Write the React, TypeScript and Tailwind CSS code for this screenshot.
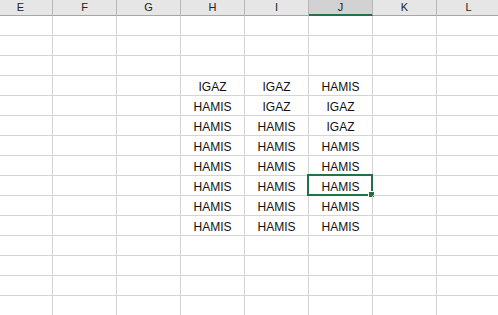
import clsx from 'clsx';

const columns = ['E', 'F', 'G', 'H', 'I', 'J', 'K', 'L'];

const data: Record<string, string[]> = {
  H: ['IGAZ', 'HAMIS', 'HAMIS', 'HAMIS', 'HAMIS', 'HAMIS', 'HAMIS', 'HAMIS'],
  I: ['IGAZ', 'IGAZ', 'HAMIS', 'HAMIS', 'HAMIS', 'HAMIS', 'HAMIS', 'HAMIS'],
  J: ['HAMIS', 'IGAZ', 'IGAZ', 'HAMIS', 'HAMIS', 'HAMIS', 'HAMIS', 'HAMIS'],
};

const firstDataRow = 3;
const rowCount = 16;
const selected = { col: 'J', row: firstDataRow + 5 };

function App(): JSX.Element {
  return (
    <div className="h-[315px] w-[498px] overflow-hidden bg-white font-['Liberation_Sans',Arial,sans-serif]">
      <div className="ml-[-11px] w-max">
        <div className="flex">
          {columns.map(col => (
            <div
              className={clsx(
                'flex h-[16px] w-[64px] items-start justify-center border-r border-[#b7b7b7] pt-[1px] text-[11px] leading-[13px] text-[#222]',
                col === selected.col ? 'border-b-2 border-b-[#217346] bg-[#d2d2d2]' : 'border-b border-b-[#a6a6a6] bg-[#e6e6e6]'
              )}
              key={col}
            >
              {col}
            </div>
          ))}
        </div>
        {Array.from({ length: rowCount }, (_, r) => (
          <div className="flex" key={r}>
            {columns.map(col => {
              const value = data[col]?.[r - firstDataRow];
              const isSelected = col === selected.col && r === selected.row;
              return (
                <div
                  className="relative flex h-[20px] w-[64px] items-end justify-center border-r border-b border-[#d4d4d4] pb-[1px] text-[12px] leading-[14px] text-[#111]"
                  key={col}
                >
                  {value}
                  {isSelected && (
                    <div className="absolute -top-[2px] -left-[2px] -right-[1px] -bottom-[1px] border-2 border-[#217346]">
                      <div className="absolute -right-[4px] -bottom-[4px] h-[7px] w-[7px] border border-white bg-[#217346]" />
                    </div>
                  )}
                </div>
              );
            })}
          </div>
        ))}
      </div>
    </div>
  );
}

export default App;
